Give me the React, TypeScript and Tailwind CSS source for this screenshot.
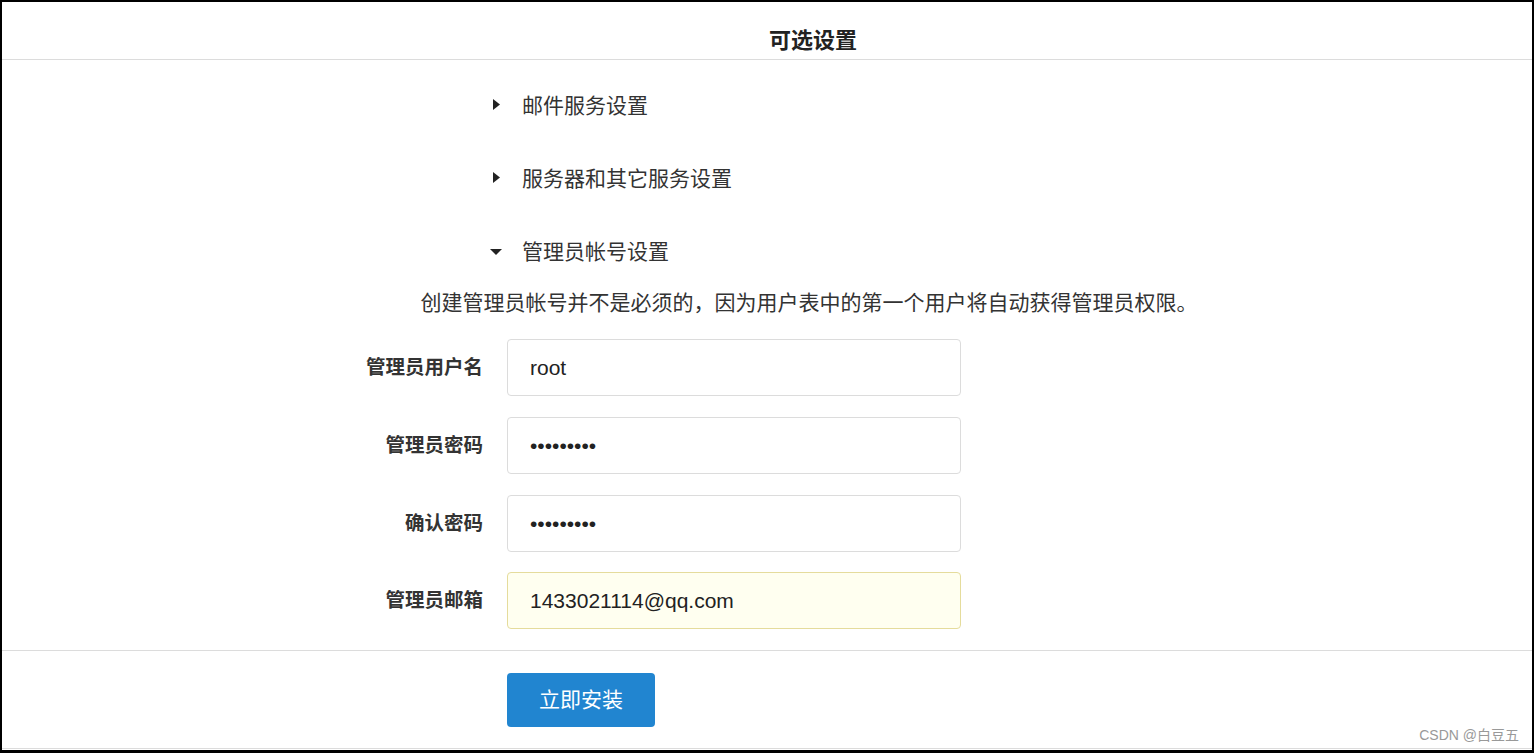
import React from "react";

const cjk = { fontFamily: '"Liberation Sans", "Noto Sans CJK SC", sans-serif' };

function Caret({ open }: { open: boolean }) {
  return (
    <div className="w-[32px] h-[30px] flex items-center">
      {open ? (
        <svg width="12" height="8" viewBox="0 0 12 8" className="ml-[0px]">
          <path d="M0 1 L12 1 L6 7 Z" fill="#222" />
        </svg>
      ) : (
        <svg width="8" height="12" viewBox="0 0 8 12" className="ml-[3px] -mt-[3px]">
          <path d="M0 0 L7 5.5 L0 11 Z" fill="#222" />
        </svg>
      )}
    </div>
  );
}

function Row({ label, children, className = "" }: { label: string; children: React.ReactNode; className?: string }) {
  return (
    <div className={"flex items-center " + className}>
      <div className="w-[150px] ml-[331px] text-right font-bold text-[19.5px] text-[#333]">{label}</div>
      <div className="ml-[24px]">{children}</div>
    </div>
  );
}

export default function App() {
  const inputCls =
    "w-[454px] h-[57px] rounded-[4px] border border-[#dcdcdc] bg-white px-[22px] text-[21px] text-[#222] outline-none";
  return (
    <div
      className="relative w-[1534px] h-[753px] bg-white border-l-2 border-t-2 border-r-2 border-b-[3px] border-black flex flex-col"
      style={cjk}
    >
      <div className="h-[58px] border-b border-[#dcdcdc] flex justify-center pl-[92px] pt-[24px] shrink-0">
        <div className="text-[22px] leading-[30px] font-bold text-[#222]">可选设置</div>
      </div>

      <div className="flex flex-col gap-[43px] pt-[31px] pl-[488px]">
        {[
          { t: "邮件服务设置", o: false },
          { t: "服务器和其它服务设置", o: false },
          { t: "管理员帐号设置", o: true },
        ].map((it) => (
          <div key={it.t} className="flex items-center h-[30px]">
            <Caret open={it.o} />
            <div className="text-[21px] leading-[30px] text-[#333]">{it.t}</div>
          </div>
        ))}
      </div>

      <div className="mt-[21px] h-[30px] flex justify-center pl-[84px] text-[21px] leading-[30px] text-[#333]">
        创建管理员帐号并不是必须的，因为用户表中的第一个用户将自动获得管理员权限。
      </div>

      <div className="mt-[21px] flex flex-col">
        <Row label="管理员用户名">
          <input className={inputCls} readOnly defaultValue="root" style={cjk} />
        </Row>
        <Row label="管理员密码" className="mt-[21px]">
          <input className={inputCls} type="password" readOnly defaultValue="123456789" style={cjk} />
        </Row>
        <Row label="确认密码" className="mt-[21px]">
          <input className={inputCls} type="password" readOnly defaultValue="123456789" style={cjk} />
        </Row>
        <Row label="管理员邮箱" className="mt-[20px]">
          <input
            className="w-[454px] h-[57px] rounded-[4px] border border-[#e5dc9c] bg-[#fffff0] px-[22px] text-[21px] text-[#222] outline-none"
            readOnly
            defaultValue="1433021114@qq.com"
            style={cjk}
          />
        </Row>
      </div>

      <div className="mt-[21px] border-t border-[#dcdcdc] pt-[22px] pb-[21px] border-b">
        <button className="ml-[505px] w-[148px] h-[54px] rounded-[4px] bg-[#2185d0] text-white text-[21px]">
          立即安装
        </button>
      </div>

      <div className="absolute right-[13px] bottom-[5px] text-[14px] leading-[20px] text-[#999]">CSDN @白豆五</div>
    </div>
  );
}
